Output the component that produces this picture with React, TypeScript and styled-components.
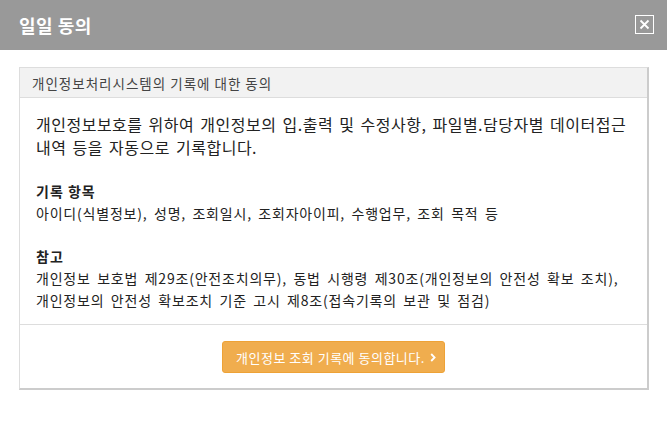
import React from 'react';
import styled, { createGlobalStyle } from 'styled-components';

const GlobalStyle = createGlobalStyle`
  html, body {
    margin: 0;
    padding: 0;
    background: #fff;
  }
  body {
    font-family: "Noto Sans CJK KR", "Noto Sans", sans-serif;
    color: #222;
  }
`;

const Modal = styled.div`
  width: 667px;
  background: #fff;
`;

const TitleBar = styled.header`
  height: 50px;
  background: #999;
  display: flex;
  align-items: center;
  justify-content: space-between;
  padding: 0 13px 0 19px;
  box-sizing: border-box;
`;

const Title = styled.h2`
  margin: 0;
  font-size: 18px;
  font-weight: 700;
  color: #fff;
  letter-spacing: 0.5px;
`;

const CloseButton = styled.button`
  width: 19px;
  height: 19px;
  padding: 0;
  margin-top: -1px;
  border: 1px solid #fff;
  background: transparent;
  display: flex;
  align-items: center;
  justify-content: center;
  cursor: pointer;
`;

const Body = styled.div`
  padding: 17px 18px 0 19px;
`;

const Panel = styled.section`
  border: 1px solid #ddd;
  border-right: 2px solid #ccc;
  border-bottom: 2px solid #ccc;
`;

const PanelHead = styled.div`
  height: 29px;
  display: flex;
  align-items: center;
  padding: 0 12px;
  background: #f2f2f2;
  border-bottom: 1px solid #ddd;
  font-size: 13.5px;
  letter-spacing: 1px;
  color: #444;
`;

const PanelBody = styled.div`
  padding: 15px 16px 13px;
  word-break: keep-all;
`;

const Lead = styled.p`
  margin: 0;
  font-size: 16px;
  line-height: 23px;
  letter-spacing: 0.5px;
  word-spacing: 2px;
`;

const Block = styled.div`
  margin-top: 21px;
`;

const BlockTitle = styled.strong`
  display: block;
  font-size: 14px;
  line-height: 22px;
  font-weight: 700;
  letter-spacing: 1px;
`;

const BlockText = styled.p`
  margin: 0;
  font-size: 14px;
  line-height: 22px;
  letter-spacing: 0.8px;
  word-spacing: 2.5px;
`;

const PanelFoot = styled.div`
  border-top: 1px solid #ddd;
  padding: 16px 0 15px;
  display: flex;
  justify-content: center;
`;

const AgreeButton = styled.button`
  height: 32px;
  padding: 0 8px 0 13px;
  display: flex;
  align-items: center;
  gap: 5px;
  background: #f0ad4e;
  border: 1px solid #eea236;
  border-radius: 3px;
  color: #fff;
  font-family: inherit;
  font-size: 13px;
  letter-spacing: 0.5px;
  cursor: pointer;
`;

const Chevron = () => (
  <svg width="6" height="9" viewBox="0 0 6 9">
    <polyline points="1.2,1 4.6,4.5 1.2,8" fill="none" stroke="#fff" strokeWidth="1.8" />
  </svg>
);

export default function App() {
  return (
    <Modal>
      <GlobalStyle />
      <TitleBar>
        <Title>일일 동의</Title>
        <CloseButton aria-label="닫기">
          <svg width="11" height="11" viewBox="0 0 11 11">
            <path d="M1.5 1.5 L9.5 9.5 M9.5 1.5 L1.5 9.5" stroke="#fff" strokeWidth="1.8" />
          </svg>
        </CloseButton>
      </TitleBar>
      <Body>
        <Panel>
          <PanelHead>개인정보처리시스템의 기록에 대한 동의</PanelHead>
          <PanelBody>
            <Lead>
              개인정보보호를 위하여 개인정보의 입.출력 및 수정사항, 파일별.담당자별 데이터접근 내역 등을 자동으로
              기록합니다.
            </Lead>
            <Block>
              <BlockTitle>기록 항목</BlockTitle>
              <BlockText>아이디(식별정보), 성명, 조회일시, 조회자아이피, 수행업무, 조회 목적 등</BlockText>
            </Block>
            <Block>
              <BlockTitle>참고</BlockTitle>
              <BlockText>
                개인정보 보호법 제29조(안전조치의무), 동법 시행령 제30조(개인정보의 안전성 확보 조치), 개인정보의 안전성
                확보조치 기준 고시 제8조(접속기록의 보관 및 점검)
              </BlockText>
            </Block>
          </PanelBody>
          <PanelFoot>
            <AgreeButton>
              개인정보 조회 기록에 동의합니다.
              <Chevron />
            </AgreeButton>
          </PanelFoot>
        </Panel>
      </Body>
    </Modal>
  );
}
